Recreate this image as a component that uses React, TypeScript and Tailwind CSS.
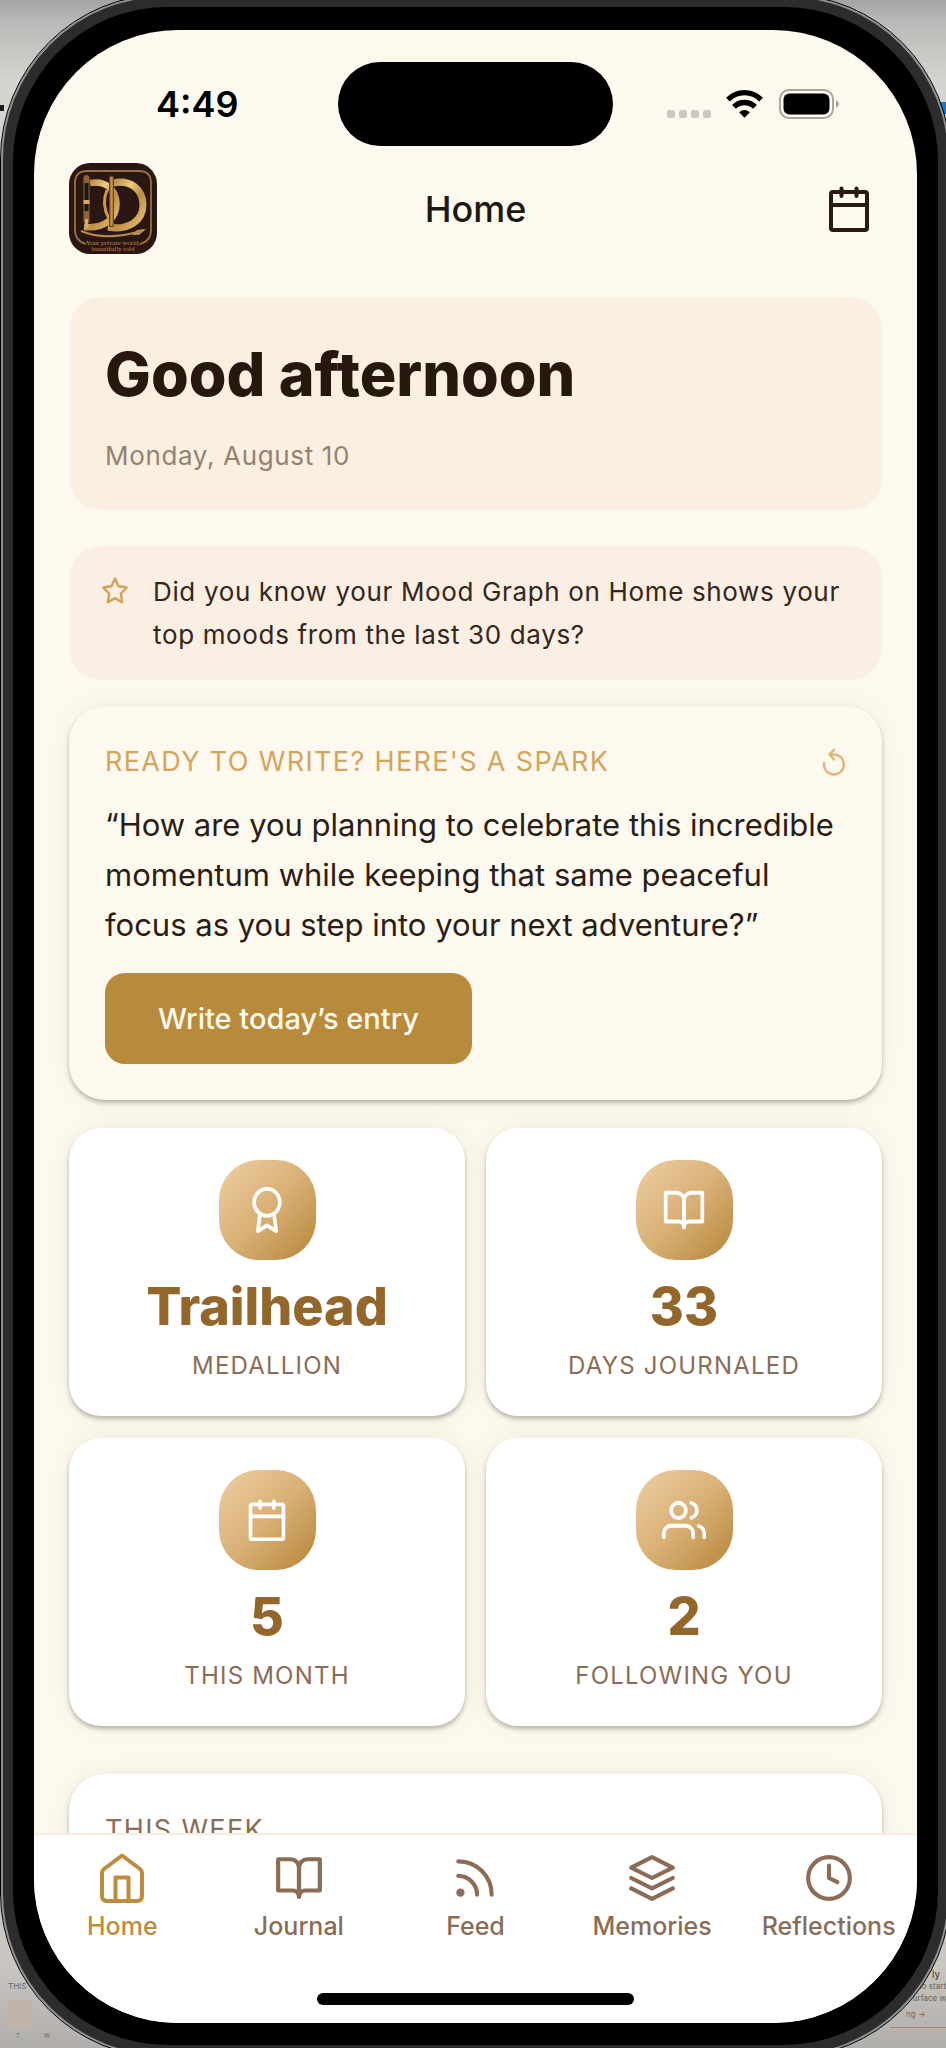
import type { ReactNode } from "react";
import { FiAward, FiBookOpen, FiClock, FiLayers, FiRss, FiStar, FiUsers } from "react-icons/fi";

function CalendarIcon() {
  return (
    <svg viewBox="0 0 48 50" className="h-full w-full" fill="none" stroke="currentColor" strokeWidth="4" strokeLinecap="round" aria-hidden="true">
      <rect x="6" y="8" width="36" height="38" rx="2" />
      <path d="M6 21 H42 M16.500 4.500 V12 M31.500 4.500 V12" />
    </svg>
  );
}

const stats = [
  { value: "Trailhead", label: "MEDALLION", icon: <FiAward className="h-full w-full" preserveAspectRatio="none" /> },
  { value: "33", label: "DAYS JOURNALED", icon: <FiBookOpen className="h-full w-full" preserveAspectRatio="none" /> },
  { value: "5", label: "THIS MONTH", icon: <CalendarIcon /> },
  { value: "2", label: "FOLLOWING YOU", icon: <FiUsers className="h-full w-full" preserveAspectRatio="none" /> },
];

function HomeIcon() {
  return (
    <svg viewBox="0 0 50 50" className="size-[50px]" fill="none" stroke="currentColor" strokeWidth="4" strokeLinejoin="round" aria-hidden="true">
      <path d="M5 20 Q5 17.500 7 16 L25 2.500 L43 16 Q45 17.500 45 20 V43 Q45 48 40 48 H10 Q5 48 5 43 Z" />
      <path d="M18.500 48 V24.500 H31.500 V48" />
    </svg>
  );
}

function RefreshIcon() {
  return (
    <svg viewBox="0 0 24 28" className="h-7 w-6" fill="none" stroke="currentColor" strokeWidth="2.400" strokeLinecap="round" strokeLinejoin="round" aria-hidden="true">
      <path d="M2 15 A10 10 0 1 0 12 6.500 H8" />
      <path d="M12 1.800 L7.500 6.500 L12 11.500" />
    </svg>
  );
}

function Logo() {
  return (
    <svg viewBox="0 0 88 91" className="h-[91px] w-[88px]" role="img" aria-label="DD journal">
      <defs>
        <linearGradient id="gold" x1="0" y1="0" x2="1" y2="1">
          <stop offset="0" stopColor="#a87c3a" />
          <stop offset="0.35" stopColor="#ecc97f" />
          <stop offset="0.6" stopColor="#bd8e44" />
          <stop offset="1" stopColor="#e8c173" />
        </linearGradient>
      </defs>
      <rect width="88" height="91" rx="21" fill="#2a1613" />
      <path d="M17 81 Q6 78 6 67 V20 Q6 8 18 8 H70 Q82 8 82 20 V67 Q82 78 71 81" fill="none" stroke="#96703f" strokeWidth="1.800" />
      <path d="M21 20 C38 17 47 28 47.500 40 C48 55 36 66 15 64" fill="none" stroke="url(#gold)" strokeWidth="6.500" />
      <path d="M44 20 C62 16 74 27 74 42 C74 57 60 68 39 64" fill="none" stroke="url(#gold)" strokeWidth="7" />
      <path d="M38 27 Q32 41 40 56" fill="none" stroke="#c99a50" strokeWidth="3" />
      <path d="M42.500 15 V62" stroke="#6b4420" strokeWidth="5" strokeLinecap="round" />
      <path d="M42.500 15 V62" stroke="#c4924c" strokeWidth="2.500" strokeLinecap="round" />
      <path d="M17.500 15 V58" stroke="#8c6434" strokeWidth="6" strokeLinecap="round" />
      <path d="M17.500 20 V48" stroke="#17171b" strokeWidth="4" />
      <path d="M17.500 37 V41" stroke="#d6a65c" strokeWidth="6" />
      <path d="M17.500 56 V65" stroke="#d9a876" strokeWidth="3" />
      <path d="M12 68 Q38 79 75 67" fill="none" stroke="#b88b4b" strokeWidth="2" />
      <path d="M63 72 L68 67 L77 66 L70 72 Z" fill="#b88b4b" />
      <text x="44" y="82" textAnchor="middle" fill="#b98e5c" fontSize="7" fontFamily="Liberation Serif, serif">Your private world,</text>
      <text x="44" y="88" textAnchor="middle" fill="#b98e5c" fontSize="7" fontFamily="Liberation Serif, serif">beautifully told</text>
    </svg>
  );
}

function StatusBar() {
  return (
    <div className="grid h-[84px] grid-cols-[1fr_275px_1fr] items-center">
      <time className="pl-[122px] text-[36px] leading-10 font-semibold text-black">4:49</time>
      <div className="h-[84px] rounded-full bg-black" />
      <div className="flex items-center pl-[54px]">
        <div className="mt-5 flex gap-1">
          <span className="size-2 rounded-xs bg-[#ccc9c0]" />
          <span className="size-2 rounded-xs bg-[#ccc9c0]" />
          <span className="size-2 rounded-xs bg-[#ccc9c0]" />
          <span className="size-2 rounded-xs bg-[#ccc9c0]" />
        </div>
        <svg viewBox="0 0 38 28" className="ml-[15px] h-7 w-[37px]" fill="none" stroke="#000" aria-label="Wi-Fi">
          <path d="M2 9.500 C11.500 0 26.500 0 36 9.500" strokeWidth="5.500" />
          <path d="M8.200 17 C14 11 24 11 29.800 17" strokeWidth="5.500" />
          <path d="M13.500 22.500 Q19 18 24.500 22.500 L19 28 Z" fill="#000" stroke="none" />
        </svg>
        <svg viewBox="0 0 62 30" className="ml-4 h-[30px] w-[62px]" aria-label="Battery">
          <rect x="1" y="1" width="53" height="28" rx="9" fill="none" stroke="#a8a59d" strokeWidth="2" />
          <rect x="4.500" y="4.500" width="46" height="21" rx="6" fill="#000" />
          <path d="M57 11 Q60 13 60 15 Q60 17 57 19 Z" fill="#a8a59d" />
        </svg>
      </div>
    </div>
  );
}

function NavItem({ label, active, children }: { label: string; active?: boolean; children: ReactNode }) {
  return (
    <a
      href="#"
      aria-current={active ? "page" : undefined}
      className={
        active
          ? "flex flex-col items-center gap-[7px] text-[#be8c3c]"
          : "flex flex-col items-center gap-[7px] text-[#8b6c56]"
      }
    >
      {children}
      <span className="text-[25px] leading-8 font-medium">{label}</span>
    </a>
  );
}

export default function App() {
  return (
    <div className="relative h-screen overflow-hidden bg-[linear-gradient(180deg,#a3a3a3_0%,#bab9b7_1%,#d6d4d0_4%,#c9c5c0_96%,#b0aeac_100%)] font-['Inter',sans-serif]">
      <div aria-hidden="true" className="absolute bottom-14 left-2 text-[8px] text-[#6d6763]">THIS</div>
      <div aria-hidden="true" className="absolute bottom-2 left-4 flex gap-6 text-[6px] text-[#6d6763]">
        <span>T</span>
        <span>W</span>
      </div>
      <div aria-hidden="true" className="absolute bottom-5 left-2 h-7 w-6 bg-[#c0b3a8]" />
      <div aria-hidden="true" className="absolute right-0 bottom-7 w-12 text-[8px] leading-3 text-[#6d6259]">
        <p className="pr-1.5 text-right text-[10px] text-[#4c3525]">ly</p>
        <p className="text-right whitespace-nowrap">to start</p>
        <p className="text-right whitespace-nowrap">urface w</p>
        <p className="mt-1 pl-2 text-[#8b643f]">ng →</p>
      </div>
      <div aria-hidden="true" className="absolute right-0 bottom-[20px] h-px w-14 bg-[#a98565]" />
      <div aria-hidden="true" className="absolute top-[102px] right-0 h-3 w-3 bg-[#2471b9]" />
      <div aria-hidden="true" className="absolute top-[105px] left-0 h-1.5 w-1 bg-[#1c1c1c]" />

      <div className="relative -mt-[5px] -mr-1 ml-px flex h-[calc(100vh+14px)] rounded-[164px] border-2 border-[#8f8f8f] bg-[#2c2c2c] p-[10px] outline-1 outline-black">
        <div className="flex min-w-0 flex-1 rounded-[154px] bg-black px-[21px] pt-[23px] pb-[22px]">
          <main className="flex min-w-0 flex-1 flex-col overflow-hidden rounded-[144px] bg-[#fdf9ee] pt-8">
            <StatusBar />

            <header className="mt-[17px] grid grid-cols-[1fr_auto_1fr] items-center px-[35px]">
              <Logo />
              <h1 className="text-[36px] leading-10 font-medium text-[#1c1812]">Home</h1>
              <button type="button" aria-label="Open calendar" className="mr-[9px] h-[50px] w-12 justify-self-end text-[#281a0f]">
                <CalendarIcon />
              </button>
            </header>

            <div className="mt-[43px] flex min-h-0 flex-1 flex-col overflow-hidden px-[35px]">
              <section className="shrink-0 rounded-[32px] bg-[#fbefe2] px-9 pt-[39px] pb-[34px]">
                <h2 className="text-[61px] leading-[76px] font-extrabold text-[#27170d]">Good afternoon</h2>
                <p className="mt-6 text-[26px] leading-10 tracking-wide text-[#948272]">Monday, August 10</p>
              </section>

              <section className="mt-9 flex shrink-0 gap-6 rounded-[32px] bg-[#faefe2] py-6 pr-6 pl-8">
                <FiStar className="mt-1.5 h-[30px] w-7 shrink-0 text-[#d4a35a]" preserveAspectRatio="none" />
                <p className="text-[26px] leading-[43px] tracking-wide text-[#33261c]">
                  Did you know your Mood Graph on Home shows your top moods from the last 30 days?
                </p>
              </section>

              <section className="mt-[26px] shrink-0 rounded-[36px] bg-[#fdf9ee] px-9 pt-[38px] pb-9 shadow-[0_3px_4px_rgba(0,0,0,0.25),0_0_24px_rgba(120,80,40,0.08)]">
                <div className="flex items-center justify-between text-[#d4a45f]">
                  <h3 className="text-[27px] leading-9 tracking-wider">READY TO WRITE? HERE'S A SPARK</h3>
                  <button type="button" aria-label="New prompt" className="text-[#e0b67c]">
                    <RefreshIcon />
                  </button>
                </div>
                <p className="mt-5 text-[31px] leading-[50px] text-[#2a1d14]">
                  “How are you planning to celebrate this incredible momentum while keeping that same peaceful focus as you step into your next adventure?”
                </p>
                <button type="button" className="mt-[23px] h-[91px] rounded-[20px] bg-[#b88a3b] px-[53px] text-[29px] leading-9 font-medium text-[#fffaf0]">
                  Write today’s entry
                </button>
              </section>

              <div className="mt-7 grid shrink-0 grid-cols-2 gap-x-[21px] gap-y-[22px]">
                {stats.map(({ value, label, icon }) => (
                  <section
                    key={label}
                    className="flex h-[288px] flex-col items-center rounded-[32px] bg-white pt-8 shadow-[0_3px_4px_rgba(0,0,0,0.25),0_0_24px_rgba(120,80,40,0.08)]"
                  >
                    <div className="flex h-[100px] w-[97px] items-center justify-center rounded-[40px] bg-linear-to-br from-[#efcfa4] via-[#d9b076] to-[#b58636] text-white">
                      <div className="h-[46px] w-11">{icon}</div>
                    </div>
                    <strong className="mt-[15px] text-[52px] leading-16 font-extrabold text-[#93672c]">{value}</strong>
                    <span className="mt-[11px] text-[24px] leading-8 tracking-wider text-[#8b6c56]">{label}</span>
                  </section>
                ))}
              </div>

              <section className="mt-12 h-[400px] shrink-0 rounded-[36px] bg-white px-9 pt-[38px] shadow-[0_3px_4px_rgba(0,0,0,0.25),0_0_24px_rgba(120,80,40,0.08)]">
                <h3 className="text-[27px] leading-9 tracking-wider text-[#8b6c56]">THIS WEEK</h3>
              </section>
            </div>

            <nav aria-label="Main" className="relative shrink-0 border-t-2 border-[#f8ecdc] bg-white pt-[18px] pb-[18px]">
              <div className="grid grid-cols-5">
                <NavItem label="Home" active>
                  <HomeIcon />
                </NavItem>
                <NavItem label="Journal">
                  <FiBookOpen className="size-[50px]" />
                </NavItem>
                <NavItem label="Feed">
                  <FiRss className="size-[50px]" />
                </NavItem>
                <NavItem label="Memories">
                  <FiLayers className="size-[50px]" />
                </NavItem>
                <NavItem label="Reflections">
                  <FiClock className="size-[50px]" />
                </NavItem>
              </div>
              <div className="mx-auto mt-[51px] h-3 w-[317px] rounded-full bg-black" />
            </nav>
          </main>
        </div>
      </div>
    </div>
  );
}
